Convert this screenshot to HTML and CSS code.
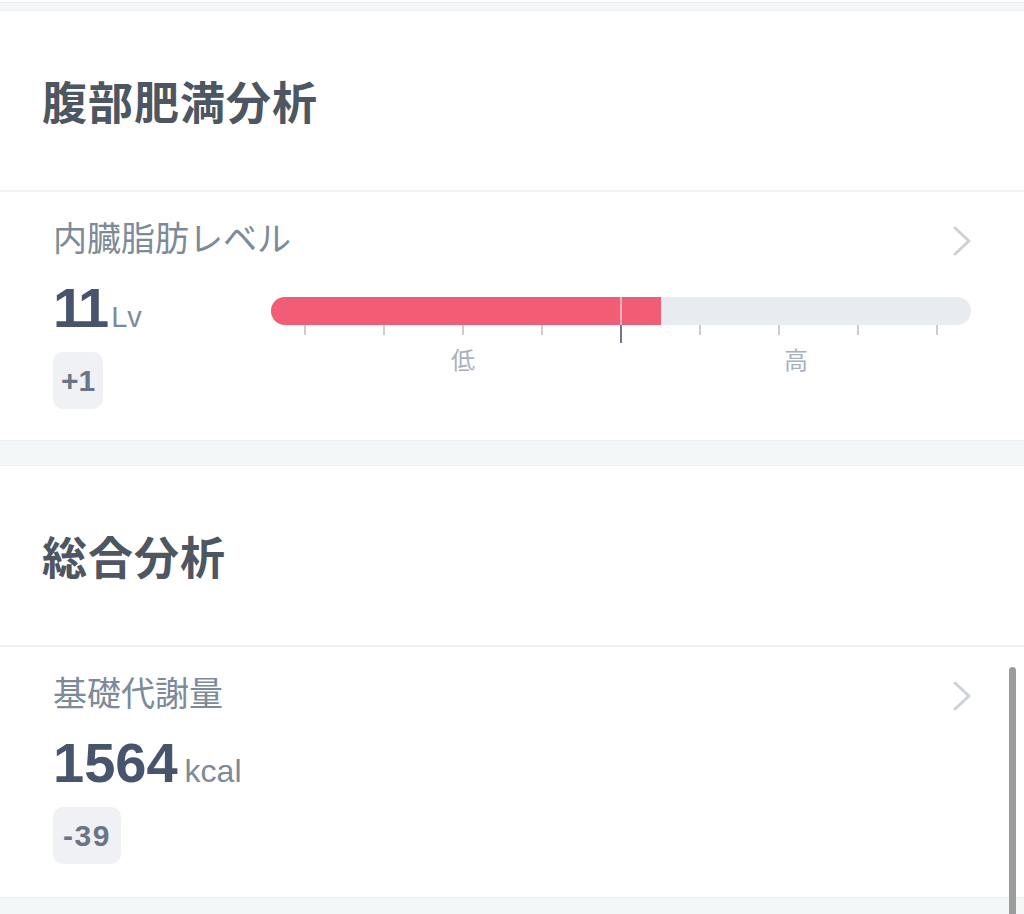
FILE: index.html
```html
<!DOCTYPE html>
<html lang="ja">
<head>
<meta charset="utf-8">
<title>分析</title>
<link rel="stylesheet" href="styles.css">
</head>
<body>
<div class="topline"></div>
<section class="card card-first">
  <div class="card-head"><h2 class="card-title">腹部肥満分析</h2></div>
  <div class="metric">
    <div class="metric-top">
      <span class="metric-label">内臓脂肪レベル</span>
      <svg class="chev" width="22" height="34" viewBox="0 0 22 34"><path d="M4 4 L18 17 L4 30" fill="none" stroke="#cdd1d7" stroke-width="3" stroke-linecap="round" stroke-linejoin="round"/></svg>
    </div>
    <div class="metric-value-row">
      <div class="metric-value"><span class="num num-tight">11</span><span class="unit unit-lv">Lv</span></div>
      <div class="gauge">
        <div class="bar">
          <div class="bar-fill" style="width:390px"></div>
          <div class="bar-marker" style="left:349px"></div>
        </div>
        <div class="ticks">
          <span class="tick"></span><span class="tick"></span><span class="tick"></span><span class="tick"></span><span class="tick tick-now"></span><span class="tick"></span><span class="tick"></span><span class="tick"></span><span class="tick"></span>
        </div>
        <div class="scale">
          <span class="scale-label" style="left:192px">低</span>
          <span class="scale-label" style="left:525px">高</span>
        </div>
      </div>
    </div>
    <span class="badge">+1</span>
  </div>
</section>
<section class="card card-second">
  <div class="card-head"><h2 class="card-title">総合分析</h2></div>
  <div class="metric metric-last">
    <div class="metric-top">
      <span class="metric-label">基礎代謝量</span>
      <svg class="chev" width="22" height="34" viewBox="0 0 22 34"><path d="M4 4 L18 17 L4 30" fill="none" stroke="#cdd1d7" stroke-width="3" stroke-linecap="round" stroke-linejoin="round"/></svg>
    </div>
    <div class="metric-value-row">
      <div class="metric-value"><span class="num">1564</span><span class="unit unit-kcal">kcal</span></div>
    </div>
    <span class="badge badge-wide">-39</span>
  </div>
</section>
<div class="scrollbar"></div>
</body>
</html>
```
FILE: styles.css
```css
html, body {
  margin: 0;
  padding: 0;
}
body {
  background: #f4f7f8;
  font-family: "Liberation Sans", "Noto Sans CJK JP", sans-serif;
  height: 914px;
  overflow: hidden;
  position: relative;
}
.topline {
  height: 2px;
  background: #fdfdfe;
  border-bottom: 1px solid #eef1f4;
}
.card {
  background: #ffffff;
  border-top: 1px solid #eef0f3;
  border-bottom: 1px solid #eceff2;
}
.card-first {
  margin-top: 7px;
}
.card-second {
  margin-top: 24px;
}
.card-head {
  height: 181px;
  display: flex;
  align-items: center;
  padding-left: 42px;
  border-bottom: 2px solid #eef0f3;
  box-sizing: border-box;
}
.card-title {
  margin: 0;
  font-family: "Noto Sans CJK JP", sans-serif;
  font-weight: 700;
  font-size: 45px;
  line-height: 1;
  color: #4d5661;
  letter-spacing: 1px;
}
.metric {
  padding: 26px 53px 31px 53px;
  display: flex;
  flex-direction: column;
  align-items: flex-start;
}
.metric-last {
  padding-bottom: 33px;
}
.metric-top {
  align-self: stretch;
  display: flex;
  justify-content: space-between;
  align-items: center;
  height: 38px;
}
.metric-label {
  font-family: "Noto Sans CJK JP", sans-serif;
  font-size: 34px;
  line-height: 38px;
  color: #7d8a99;
}
.chev {
  margin-right: -2px;
  margin-top: 8px;
}
.metric-value-row {
  align-self: stretch;
  display: flex;
  align-items: flex-start;
  margin-top: 25px;
  height: 54px;
}
.metric-value {
  width: 218px;
  display: flex;
  align-items: baseline;
  white-space: nowrap;
}
.num {
  font-weight: 700;
  font-size: 56px;
  line-height: 54px;
  color: #47546c;
}
.num-tight {
  letter-spacing: -3px;
}
.unit {
  color: #7d8a99;
  margin-left: 4px;
}
.unit-lv {
  font-size: 29px;
  margin-left: 5px;
}
.unit-kcal {
  font-size: 32px;
  margin-left: 7px;
}
.gauge {
  flex: 1;
  margin-top: 16px;
  position: relative;
}
.bar {
  height: 28px;
  border-radius: 14px;
  background: #e8ebf0;
  overflow: hidden;
  position: relative;
}
.bar-fill {
  height: 100%;
  background: #f25d76;
}
.bar-marker {
  position: absolute;
  top: 0;
  width: 2px;
  height: 100%;
  background: #f7b0bc;
}
.ticks {
  display: flex;
  justify-content: space-between;
  align-items: flex-start;
  padding: 0 33px;
}
.tick {
  width: 2px;
  height: 10px;
  background: #c9ced5;
}
.tick-now {
  height: 18px;
  background: #6e7888;
}
.scale {
  position: relative;
  height: 30px;
}
.scale-label {
  position: absolute;
  top: 1px;
  transform: translateX(-50%);
  font-family: "Noto Sans CJK JP", sans-serif;
  font-size: 24px;
  line-height: 30px;
  color: #a7b0bb;
}
.badge {
  margin-top: 17px;
  height: 57px;
  padding: 0 8px;
  box-sizing: border-box;
  display: flex;
  align-items: center;
  border-radius: 10px;
  background: #eff1f5;
  font-weight: 700;
  font-size: 30px;
  color: #6a7585;
}
.badge-wide {
  padding: 0 10px;
  letter-spacing: 1.5px;
}
.scrollbar {
  position: absolute;
  left: 1009px;
  top: 667px;
  width: 7px;
  height: 260px;
  border-radius: 4px;
  background: #9c9c9c;
}
```
